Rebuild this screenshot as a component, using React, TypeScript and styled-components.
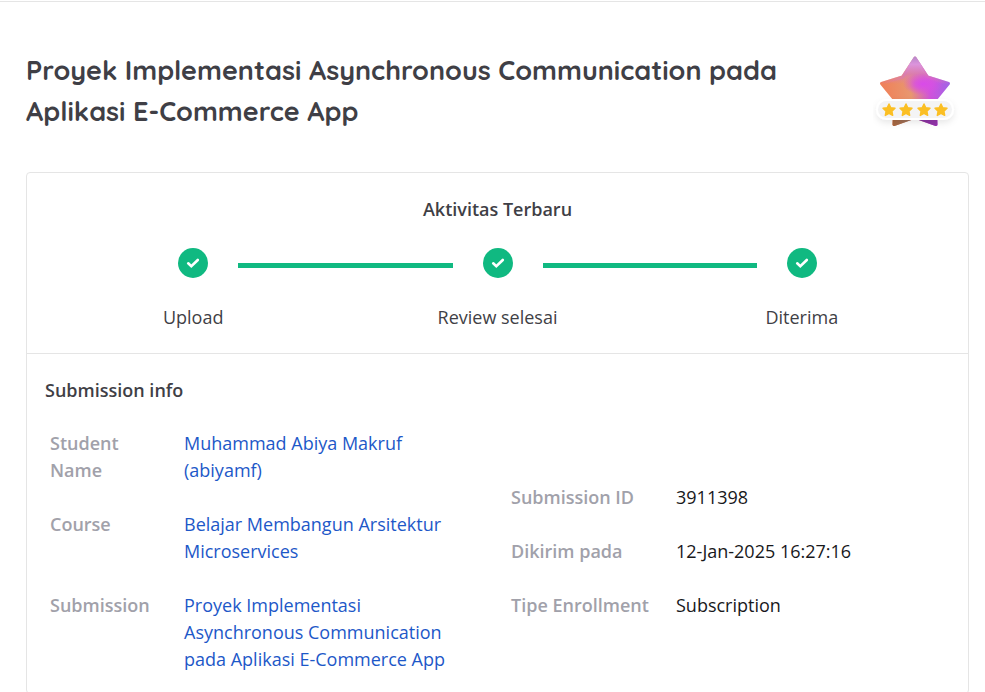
import React from 'react';
import styled, { createGlobalStyle } from 'styled-components';

const GlobalStyle = createGlobalStyle`
  * { box-sizing: border-box; }
  body { margin: 0; background: #fff; color: #3f3f46; font-family: "Open Sans", "Noto Sans", sans-serif; font-size: 18px; line-height: 27px; }
`;

const Page = styled.main`
  margin-top: 1px;
  border-top: 1px solid #e5e5e5;
  padding: 48px 16px 0 26px;
`;

const Header = styled.header`
  display: flex;
  justify-content: space-between;
  align-items: flex-start;
  margin-bottom: 40px;
`;

const Title = styled.h1`
  margin: 0;
  max-width: 790px;
  font-family: Quicksand, Lato, "Open Sans", sans-serif;
  font-size: 27px;
  font-weight: 700;
  line-height: 41px;
`;

const Rating = styled.svg`
  flex: none;
  width: 96px;
  height: 82px;
`;

const Card = styled.section`
  border: 1px solid #e5e5e5;
  border-radius: 4px;
`;

const Activity = styled.section`
  padding: 23px 0 22px;
  border-bottom: 1px solid #e5e5e5;
`;

const Heading = styled.h2<{ $center?: boolean }>`
  margin: 0;
  font-size: 18px;
  font-weight: 600;
  line-height: 27px;
  text-align: ${p => (p.$center ? 'center' : 'left')};
`;

const Steps = styled.ol`
  list-style: none;
  margin: 25px 0 0;
  padding: 0 14px;
  display: grid;
  grid-template-columns: repeat(3, 1fr);
`;

const Step = styled.li`
  text-align: center;
`;

const Track = styled.div`
  display: flex;
  align-items: center;
  height: 30px;
  margin-bottom: 26px;
`;

const Line = styled.span<{ $shown: boolean }>`
  flex: 1;
  height: 5px;
  margin-top: 5px;
  background: ${p => (p.$shown ? '#10b981' : 'transparent')};
`;

const Dot = styled.svg`
  width: 30px;
  height: 30px;
  margin: 0 30px;
`;

const Info = styled.section`
  padding: 23px 18px 20px;
`;

const Columns = styled.div`
  display: grid;
  grid-template-columns: 1fr 1fr;
  column-gap: 17px;
  align-items: center;
  margin-top: 26px;
`;

const Details = styled.dl<{ $label: number }>`
  display: grid;
  grid-template-columns: ${p => p.$label}px 1fr;
  row-gap: 27px;
  margin: 0;
  padding: 0 5px;
`;

const Label = styled.dt`
  padding-right: 16px;
  color: #a1a1aa;
  font-weight: 600;
`;

const Value = styled.dd`
  margin: 0;
  color: #18181b;
  max-width: 270px;
`;

const Link = styled.a`
  color: #1d58c8;
  text-decoration: none;
`;

const steps = ['Upload', 'Review selesai', 'Diterima'];
const goldStars = [16, 33, 51, 68];
const starShape = 'M42 8 54.500 27 75.500 33.500 62 50 63 74.500 42 67 21 74.500 22 50 8.500 33.500 29.500 27Z';

function StarRating() {
  return (
    <Rating viewBox="0 0 96 82" role="img" aria-label="4 stars">
      <defs>
        <linearGradient id="base" x1="9" y1="44" x2="77" y2="36" gradientUnits="userSpaceOnUse">
          <stop offset="0" stopColor="#f08058" />
          <stop offset="0.42" stopColor="#e8976f" />
          <stop offset="0.7" stopColor="#cf52dc" />
          <stop offset="1" stopColor="#a064e6" />
        </linearGradient>
        <linearGradient id="top" x1="42" y1="6" x2="42" y2="34" gradientUnits="userSpaceOnUse">
          <stop offset="0" stopColor="#b487c8" />
          <stop offset="0.3" stopColor="#dc94dc" />
          <stop offset="0.65" stopColor="#d97bb4" stopOpacity="0.8" />
          <stop offset="1" stopColor="#dc78b4" stopOpacity="0" />
        </linearGradient>
        <radialGradient id="glow" cx="0" cy="0" r="1" gradientUnits="userSpaceOnUse" gradientTransform="translate(50 34) scale(20 11)">
          <stop offset="0" stopColor="#d94aea" />
          <stop offset="0.4" stopColor="#d94fe4" stopOpacity="0.8" />
          <stop offset="1" stopColor="#d94fe4" stopOpacity="0" />
        </radialGradient>
        <linearGradient id="feet" x1="20" y1="0" x2="64" y2="0" gradientUnits="userSpaceOnUse">
          <stop offset="0" stopColor="#a8663e" />
          <stop offset="0.35" stopColor="#98705c" />
          <stop offset="0.6" stopColor="#86349d" />
          <stop offset="1" stopColor="#9434ac" />
        </linearGradient>
        <clipPath id="lower"><rect y="68" width="96" height="14" /></clipPath>
        <filter id="shadow" x="-20%" y="-40%" width="140%" height="220%">
          <feDropShadow dx="0" dy="3" stdDeviation="3" floodColor="#000" floodOpacity="0.09" />
        </filter>
      </defs>
      <g strokeWidth="3" strokeLinejoin="round">
        <path d={starShape} fill="url(#base)" stroke="url(#base)" />
        <path d={starShape} fill="url(#top)" />
        <path d={starShape} fill="none" stroke="url(#top)" />
        <path d={starShape} fill="url(#glow)" />
        <path clipPath="url(#lower)" d="M62 50 63 74.500 42 67 21 74.500 22 50Z" fill="url(#feet)" stroke="url(#feet)" />
      </g>
      <rect x="3" y="49" width="78" height="21" rx="10.500" fill="#fff" filter="url(#shadow)" />
      <rect x="5" y="51" width="74" height="17" rx="8.500" fill="#f4f4f5" />
      {goldStars.map(x => (
        <path
          key={x}
          transform={`translate(${x} 60)`}
          d="M0-6 1.800-2.200 6-1.700 2.900 1.200 3.700 5.400 0 3.400-3.700 5.400-2.900 1.200-6-1.700-1.800-2.200Z"
          fill="#fbbf24"
          stroke="#fbbf24"
          strokeWidth="1.400"
          strokeLinejoin="round"
        />
      ))}
    </Rating>
  );
}

export default function App() {
  return (
    <Page>
      <GlobalStyle />
      <Header>
        <Title>Proyek Implementasi Asynchronous Communication pada Aplikasi E-Commerce App</Title>
        <StarRating />
      </Header>
      <Card>
        <Activity>
          <Heading $center>Aktivitas Terbaru</Heading>
          <Steps>
            {steps.map((s, i) => (
              <Step key={s}>
                <Track>
                  <Line $shown={i > 0} />
                  <Dot viewBox="0 0 30 30" aria-hidden="true">
                    <circle cx="15" cy="15" r="15" fill="#10b981" />
                    <path d="M10.200 15.300 13.300 18.200 19.800 12" fill="none" stroke="#fff" strokeWidth="2.600" strokeLinecap="round" />
                  </Dot>
                  <Line $shown={i < steps.length - 1} />
                </Track>
                {s}
              </Step>
            ))}
          </Steps>
        </Activity>
        <Info>
          <Heading>Submission info</Heading>
          <Columns>
            <Details $label={134}>
              <Label>Student Name</Label>
              <Value><Link href="#student">Muhammad Abiya Makruf (abiyamf)</Link></Value>
              <Label>Course</Label>
              <Value><Link href="#course">Belajar Membangun Arsitektur Microservices</Link></Value>
              <Label>Submission</Label>
              <Value><Link href="#submission">Proyek Implementasi Asynchronous Communication pada Aplikasi E-Commerce App</Link></Value>
            </Details>
            <Details $label={165}>
              <Label>Submission ID</Label>
              <Value>3911398</Value>
              <Label>Dikirim pada</Label>
              <Value>12-Jan-2025 16:27:16</Value>
              <Label>Tipe Enrollment</Label>
              <Value>Subscription</Value>
            </Details>
          </Columns>
        </Info>
      </Card>
    </Page>
  );
}
